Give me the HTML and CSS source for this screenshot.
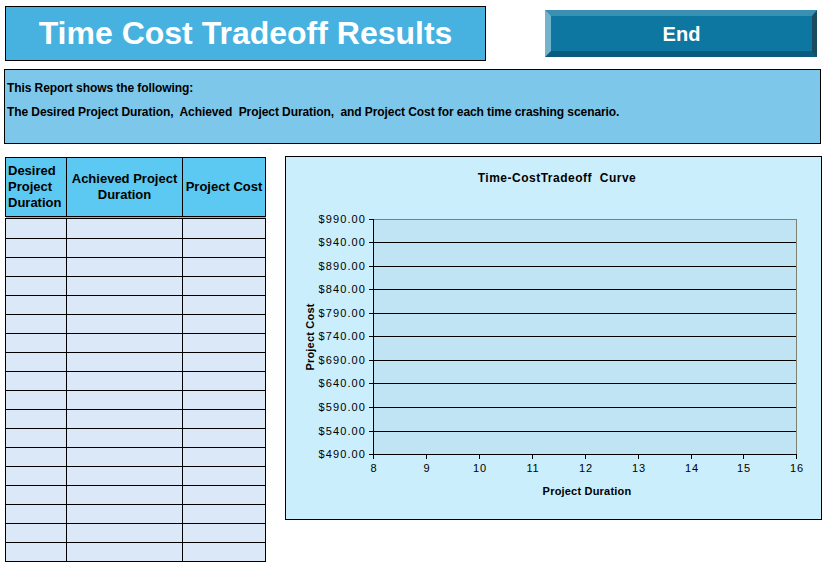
FILE: index.html
```html
<!DOCTYPE html>
<html>
<head>
<meta charset="utf-8">
<link rel="stylesheet" href="styles.css">
</head>
<body>
<div class="top">
  <h1 class="title">Time Cost Tradeoff Results</h1>
  <div class="end">End</div>
</div>
<div class="desc">
  <p>This Report shows the following:</p>
  <p>The Desired Project Duration,&nbsp; Achieved&nbsp; Project Duration,&nbsp; and Project Cost for each time crashing scenario.</p>
</div>
<div class="main">
  <table class="results">
    <colgroup>
      <col class="w1"><col class="w2"><col class="w3">
    </colgroup>
    <thead>
      <tr>
        <th class="c1">Desired Project Duration</th>
        <th class="c2">Achieved Project Duration</th>
        <th class="c3">Project Cost</th>
      </tr>
    </thead>
    <tbody>
      <tr class="first"><td></td><td></td><td></td></tr>
      <tr><td></td><td></td><td></td></tr>
      <tr><td></td><td></td><td></td></tr>
      <tr><td></td><td></td><td></td></tr>
      <tr><td></td><td></td><td></td></tr>
      <tr><td></td><td></td><td></td></tr>
      <tr><td></td><td></td><td></td></tr>
      <tr><td></td><td></td><td></td></tr>
      <tr><td></td><td></td><td></td></tr>
      <tr><td></td><td></td><td></td></tr>
      <tr><td></td><td></td><td></td></tr>
      <tr><td></td><td></td><td></td></tr>
      <tr><td></td><td></td><td></td></tr>
      <tr><td></td><td></td><td></td></tr>
      <tr><td></td><td></td><td></td></tr>
      <tr><td></td><td></td><td></td></tr>
      <tr><td></td><td></td><td></td></tr>
      <tr><td></td><td></td><td></td></tr>
    </tbody>
  </table>
  <div class="chart">
    <svg width="535" height="362" viewBox="0 0 535 362" xmlns="http://www.w3.org/2000/svg">
      <text class="ctitle" x="271" y="25" text-anchor="middle">Time-CostTradeoff&#160; Curve</text>
      <rect x="87.5" y="62.5" width="423" height="235" fill="#c1e4f4" stroke="#808070" stroke-width="1"/>
      <g stroke="#000" stroke-width="1">
        <line x1="83" y1="62.5" x2="88" y2="62.5"/>
        <line x1="83" y1="85.5" x2="510" y2="85.5"/>
        <line x1="83" y1="109.5" x2="510" y2="109.5"/>
        <line x1="83" y1="132.5" x2="510" y2="132.5"/>
        <line x1="83" y1="156.5" x2="510" y2="156.5"/>
        <line x1="83" y1="179.5" x2="510" y2="179.5"/>
        <line x1="83" y1="203.5" x2="510" y2="203.5"/>
        <line x1="83" y1="226.5" x2="510" y2="226.5"/>
        <line x1="83" y1="250.5" x2="510" y2="250.5"/>
        <line x1="83" y1="274.5" x2="510" y2="274.5"/>
        <line x1="83" y1="297.5" x2="511" y2="297.5"/>
        <line x1="87.5" y1="62" x2="87.5" y2="298"/>
        <line x1="87.5" y1="297" x2="87.5" y2="302"/>
        <line x1="140.5" y1="297" x2="140.5" y2="302"/>
        <line x1="193.5" y1="297" x2="193.5" y2="302"/>
        <line x1="246.5" y1="297" x2="246.5" y2="302"/>
        <line x1="299.5" y1="297" x2="299.5" y2="302"/>
        <line x1="352.5" y1="297" x2="352.5" y2="302"/>
        <line x1="405.5" y1="297" x2="405.5" y2="302"/>
        <line x1="457.5" y1="297" x2="457.5" y2="302"/>
        <line x1="510.5" y1="297" x2="510.5" y2="302"/>
      </g>
      <g class="ylab" text-anchor="end">
        <text x="80" y="66">$990.00</text>
        <text x="80" y="89">$940.00</text>
        <text x="80" y="113">$890.00</text>
        <text x="80" y="136">$840.00</text>
        <text x="80" y="160">$790.00</text>
        <text x="80" y="183">$740.00</text>
        <text x="80" y="207">$690.00</text>
        <text x="80" y="230">$640.00</text>
        <text x="80" y="254">$590.00</text>
        <text x="80" y="278">$540.00</text>
        <text x="80" y="301">$490.00</text>
      </g>
      <g class="xlab" text-anchor="middle">
        <text x="88" y="315">8</text>
        <text x="141" y="315">9</text>
        <text x="194" y="315">10</text>
        <text x="247" y="315">11</text>
        <text x="300" y="315">12</text>
        <text x="353" y="315">13</text>
        <text x="406" y="315">14</text>
        <text x="458" y="315">15</text>
        <text x="511" y="315">16</text>
      </g>
      <text class="atitle" x="301" y="338" text-anchor="middle">Project Duration</text>
      <text class="atitle" x="0" y="0" text-anchor="middle" transform="translate(28 180) rotate(-90)">Project Cost</text>
    </svg>
  </div>
</div>
</body>
</html>
```

FILE: styles.css
```css
html, body {
  margin: 0;
  padding: 0;
  background: #fff;
  font-family: "Liberation Sans", Arial, sans-serif;
}

.top {
  display: flex;
  align-items: flex-start;
  padding: 6px 0 0 5px;
  height: 63px;
  box-sizing: border-box;
}

.title {
  margin: 0;
  width: 481px;
  height: 55px;
  box-sizing: border-box;
  border: 1px solid #000;
  background: #47b1e0;
  color: #fff;
  font-size: 32px;
  font-weight: bold;
  text-align: center;
  line-height: 53px;
}

.end {
  margin: 4px 0 0 59px;
  width: 272px;
  height: 47px;
  box-sizing: border-box;
  background: #0e77a1;
  border-style: solid;
  border-width: 6px 5px 6px 6px;
  border-color: #3a90b2 #1a4b5f #0b5c7c #73b3cb;
  color: #fff;
  font-size: 20px;
  font-weight: bold;
  text-align: center;
  line-height: 37px;
}

.desc {
  margin: 6px 9px 0 4px;
  height: 75px;
  box-sizing: border-box;
  border: 1px solid #000;
  background: #7dc7ea;
  padding: 12px 0 0 2px;
}

.desc p {
  margin: 0 0 12px 0;
  font-size: 12px;
  font-weight: bold;
  line-height: 12px;
  letter-spacing: -0.08px;
  color: #000;
}

.main {
  display: flex;
  align-items: flex-start;
  padding: 12px 0 0 5px;
  gap: 19px;
}

.results {
  border-collapse: collapse;
  table-layout: fixed;
  width: 260px;
  margin-top: 1px;
}

.results .w1 { width: 61px; }
.results .w2 { width: 116px; }
.results .w3 { width: 83px; }

.results th {
  background: #5bc9f1;
  border: 1px solid #000;
  border-bottom: 3px double #000;
  height: 58px;
  padding: 0 2px;
  font-size: 13px;
  font-weight: bold;
  line-height: 16px;
  color: #000;
  white-space: nowrap;
}

.results .c1 { text-align: left; white-space: normal; }
.results .c2 { text-align: center; white-space: normal; }
.results .c3 { text-align: center; padding: 0; }

.results td {
  background: #dbe8f7;
  border: 1px solid #000;
  height: 18px;
  padding: 0;
}

.results tr.first td {
  height: 19px;
}

.chart {
  width: 537px;
  height: 364px;
  box-sizing: border-box;
  border: 1px solid #000;
  background: #cbeefc;
}

.chart svg {
  display: block;
}

.ctitle {
  font-family: "Liberation Sans", Arial, sans-serif;
  font-size: 12px;
  font-weight: bold;
  letter-spacing: 0.5px;
  fill: #000;
}

.ylab text, .xlab text {
  font-family: "Liberation Sans", Arial, sans-serif;
  font-size: 11px;
  letter-spacing: 1.1px;
  fill: #000;
}

.xlab text {
  letter-spacing: 0.8px;
}

.atitle {
  font-family: "Liberation Sans", Arial, sans-serif;
  font-size: 11px;
  font-weight: bold;
  letter-spacing: 0.2px;
  fill: #000;
}
```
